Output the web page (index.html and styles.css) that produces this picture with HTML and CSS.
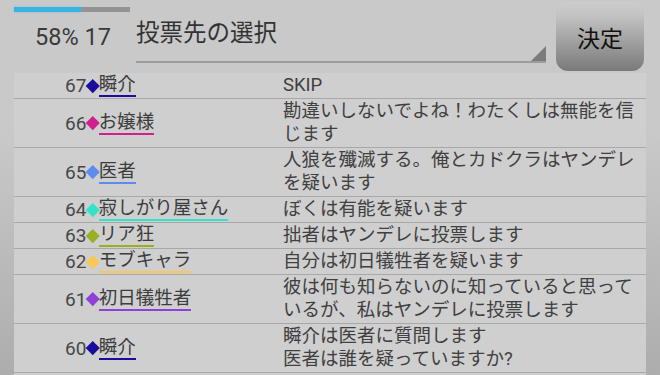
FILE: index.html
```html
<!doctype html>
<html lang="ja">
<head>
    <meta charset="UTF-8">
    <meta name="viewport" content="width=device-width, initial-scale=1.0">
    <title>投票先の選択</title>
    <link rel="stylesheet" href="styles.css">
</head>
<body>
<div class="screen">
    <div class="toolbar">
        <div class="status">
            <div class="progress"><div class="progress-fill" style="width: 58%"></div></div>
            <div class="count">58% 17</div>
        </div>
        <div class="spinner">
            <span class="spinner-label">投票先の選択</span>
            <span class="spinner-arrow"></span>
        </div>
        <button class="decide" type="button">決定</button>
    </div>

    <div class="log">
        <div class="row">
            <div class="who"><span class="no">67</span><span class="mark shun"></span><span class="name shun">瞬介</span></div>
            <div class="say">SKIP</div>
        </div>
        <div class="row">
            <div class="who"><span class="no">66</span><span class="mark ojou"></span><span class="name ojou">お嬢様</span></div>
            <div class="say">勘違いしないでよね！わたくしは無能を信じます</div>
        </div>
        <div class="row">
            <div class="who"><span class="no">65</span><span class="mark isha"></span><span class="name isha">医者</span></div>
            <div class="say">人狼を殲滅する。俺とカドクラはヤンデレを疑います</div>
        </div>
        <div class="row">
            <div class="who"><span class="no">64</span><span class="mark sabishi"></span><span class="name sabishi">寂しがり屋さん</span></div>
            <div class="say">ぼくは有能を疑います</div>
        </div>
        <div class="row">
            <div class="who"><span class="no">63</span><span class="mark riakyo"></span><span class="name riakyo">リア狂</span></div>
            <div class="say">拙者はヤンデレに投票します</div>
        </div>
        <div class="row">
            <div class="who"><span class="no">62</span><span class="mark mob"></span><span class="name mob">モブキャラ</span></div>
            <div class="say">自分は初日犠牲者を疑います</div>
        </div>
        <div class="row">
            <div class="who"><span class="no">61</span><span class="mark shonichi"></span><span class="name shonichi">初日犠牲者</span></div>
            <div class="say">彼は何も知らないのに知っていると思っているが、私はヤンデレに投票します</div>
        </div>
        <div class="row">
            <div class="who"><span class="no">60</span><span class="mark shun"></span><span class="name shun">瞬介</span></div>
            <div class="say">瞬介は医者に質問します<br>医者は誰を疑っていますか?</div>
        </div>
    </div>
</div>
</body>
</html>
```

FILE: styles.css
```css
body {
    margin: 0;
    font-family: Roboto, "Noto Sans CJK JP", sans-serif;
    background: linear-gradient(#c9c9c9 35%, #adadad);
    color: #3c3c3c;
    overflow: hidden;
}
.screen {
    width: 660px;
    height: 375px;
    display: flex;
    flex-direction: column;
}

/* top bar */
.toolbar {
    height: 73px;
    display: flex;
    flex-shrink: 0;
}
.status {
    width: 122px;
    padding-left: 14px;
}
.progress {
    margin-top: 7px;
    width: 116px;
    height: 5px;
    background-color: #939393;
}
.progress-fill {
    height: 100%;
    background-color: #3cb2e2;
    box-shadow: 0 0 2px #5cc4ee;
}
.count {
    margin-top: 14px;
    padding-left: 21px;
    font-size: 23.5px;
    line-height: 23.5px;
    color: #3a3a3a;
}
.spinner {
    width: 410px;
    height: 61px;
    border-bottom: 2px solid #9c9c9c;
    display: flex;
    justify-content: space-between;
    align-items: flex-end;
    box-sizing: content-box;
}
.spinner-label {
    align-self: flex-start;
    margin-top: 18px;
    font-size: 23.5px;
    line-height: 30px;
    color: #333333;
}
.spinner-arrow {
    width: 15px;
    height: 15px;
    background-color: #7b7b7b;
    clip-path: polygon(100% 0, 100% 100%, 0 100%);
}
.decide {
    margin: 2px 0 0 10px;
    width: 88px;
    height: 69px;
    border: none;
    border-radius: 12px;
    background: linear-gradient(#cdcdcd, #c2c2c2 20%, #7a7a7a);
    font-family: "Noto Sans CJK JP", sans-serif;
    font-size: 23px;
    color: #111111;
    padding: 0;
}

/* message log */
.log {
    flex: 1;
    margin: 0 14px;
    background-color: #cfcfcf;
}
.row {
    display: grid;
    grid-template-columns: 269px 1fr;
    border-bottom: 1px solid #a8a8a8;
    font-size: 18.5px;
}
.who {
    display: flex;
    align-items: center;
    padding-left: 51px;
    white-space: nowrap;
}
.no {
    font-size: 19px;
    color: #474747;
}
.mark {
    display: inline-block;
    width: 9.5px;
    height: 9.5px;
    margin: 0 1px 0 2px;
    transform: rotate(45deg);
    vertical-align: 3px;
    background-color: var(--c);
}
.name {
    display: inline-block;
    line-height: 21px;
    border-bottom: 2px solid var(--c);
}
.say {
    padding: 1px 0;
    line-height: 23px;
    color: #404040;
}

.shun { --c: #1c0c9e; }
.ojou { --c: #d0208e; }
.isha { --c: #5c8cf0; }
.sabishi { --c: #34e2c8; }
.riakyo { --c: #9ab024; }
.mob { --c: #f8c856; }
.shonichi { --c: #9040d6; }
```
